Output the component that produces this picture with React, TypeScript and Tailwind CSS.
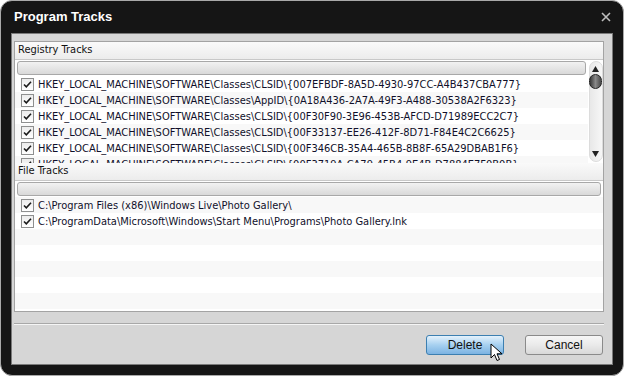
import React from 'react';

const registryRows = [
  'HKEY_LOCAL_MACHINE\\SOFTWARE\\Classes\\CLSID\\{007EFBDF-8A5D-4930-97CC-A4B437CBA777}',
  'HKEY_LOCAL_MACHINE\\SOFTWARE\\Classes\\AppID\\{0A18A436-2A7A-49F3-A488-30538A2F6323}',
  'HKEY_LOCAL_MACHINE\\SOFTWARE\\Classes\\CLSID\\{00F30F90-3E96-453B-AFCD-D71989ECC2C7}',
  'HKEY_LOCAL_MACHINE\\SOFTWARE\\Classes\\CLSID\\{00F33137-EE26-412F-8D71-F84E4C2C6625}',
  'HKEY_LOCAL_MACHINE\\SOFTWARE\\Classes\\CLSID\\{00F346CB-35A4-465B-8B8F-65A29DBAB1F6}',
  'HKEY_LOCAL_MACHINE\\SOFTWARE\\Classes\\CLSID\\{00F3719A-CA79-45B4-9E4B-D7884E7F0B0B}',
];

const fileRows = [
  'C:\\Program Files (x86)\\Windows Live\\Photo Gallery\\',
  'C:\\ProgramData\\Microsoft\\Windows\\Start Menu\\Programs\\Photo Gallery.lnk',
];

const Check: React.FC = () => (
  <span className="w-[13px] h-[13px] shrink-0 border border-[#8e8f8f] bg-gradient-to-b from-[#ececec] to-white flex items-center justify-center">
    <svg width="9" height="9" viewBox="0 0 9 9">
      <path d="M1 4.5 L3.3 6.8 L8 1.8" stroke="#1a1a1a" strokeWidth="1.6" fill="none" />
    </svg>
  </span>
);

const Row: React.FC<{ text: string; odd: boolean }> = ({ text, odd }) => (
  <div className={`h-4 shrink-0 flex items-center gap-[4px] pl-[6px] whitespace-nowrap overflow-hidden ${odd ? 'bg-[#f8f8f8]' : 'bg-white'}`}>
    <Check />
    <span className="text-[11px] text-[#10102a] leading-none">{text}</span>
  </div>
);

const SectionHeader: React.FC<{ title: string }> = ({ title }) => (
  <div className="h-[18px] shrink-0 flex items-center pl-[3px] bg-gradient-to-b from-[#fafafa] to-[#ececec] border-b border-[#c8c8c8] text-[11px] text-[#111]">
    {title}
  </div>
);

const FilterBar: React.FC = () => (
  <div className="h-[14px] shrink-0 mx-[2px] my-[1px] rounded-[3px] border border-[#a8a8a8] bg-gradient-to-b from-[#f2f2f2] to-[#d9d9d9]" />
);

const ScrollBar: React.FC = () => (
  <div className="w-[15px] shrink-0 flex flex-col items-center bg-white pt-[1px]">
    <div className="w-[14px] h-[101px] rounded-full bg-gradient-to-r from-[#e8e8e8] to-[#f7f7f7] border border-[#dcdcdc] flex flex-col items-center pt-[4px]">
      <svg width="7" height="6" viewBox="0 0 7 6"><path d="M3.5 0 L7 6 L0 6 Z" fill="#222" /></svg>
      <div className="mt-[2px] w-[13px] h-[15px] rounded-full bg-gradient-to-r from-[#3a3a3a] via-[#8a8a8a] to-[#4a4a4a] border border-[#222]" />
      <div className="flex-1" />
      <svg width="7" height="6" viewBox="0 0 7 6" className="mb-[4px]"><path d="M0 0 L7 0 L3.5 6 Z" fill="#222" /></svg>
    </div>
  </div>
);

export default function App() {
  return (
    <div className="w-[624px] h-[376px] bg-white" style={{ fontFamily: '"DejaVu Sans Condensed", "Liberation Sans", sans-serif' }}>
      <div className="w-full h-full rounded-[12px] border border-[#a9a9a9] bg-[#151515] flex flex-col px-[10px] pb-[10px]">
        <div className="h-[32px] flex items-center justify-between pl-[3px] pr-[2px]">
          <span className="text-white font-bold text-[13px]" style={{ fontFamily: '"Liberation Sans", sans-serif' }}>Program Tracks</span>
          <svg width="10" height="10" viewBox="0 0 10 10">
            <path d="M1 1 L9 9 M9 1 L1 9" stroke="#bdbdbd" strokeWidth="1.6" />
          </svg>
        </div>
        <div className="flex-1 bg-[#d6d6d6] border border-[#7a7a7a] flex flex-col px-[2px] pt-[7px]">
          <div className="h-[271px] bg-white border border-[#a3a3a3] mr-[6px] flex flex-col">
            <SectionHeader title="Registry Tracks" />
            <div className="flex h-[103px] shrink-0 overflow-hidden">
              <div className="flex-1 flex flex-col overflow-hidden">
                <FilterBar />
                <div className="flex flex-col">
                  {registryRows.map((r, i) => (
                    <Row key={r} text={r} odd={i % 2 === 1} />
                  ))}
                </div>
              </div>
              <ScrollBar />
            </div>
            <SectionHeader title="File Tracks" />
            <FilterBar />
            <div className="flex-1 flex flex-col overflow-hidden">
              {fileRows.map((r, i) => (
                <Row key={r} text={r} odd={i % 2 === 0} />
              ))}
              {[0, 1, 2, 3, 4, 5].map((i) => (
                <div key={i} className={`h-4 shrink-0 ${i % 2 === 0 ? 'bg-[#f8f8f8]' : 'bg-white'}`} />
              ))}
            </div>
          </div>
          <div className="mt-[11px] h-[2px] border-t border-[#a8a8a8] border-b border-b-[#f5f5f5] mr-[6px]" />
          <div className="flex justify-end gap-[21px] pr-[7px] mt-[10px]">
            <button className="relative w-[78px] h-[20px] rounded-[3px] border border-[#3c7fb1] bg-gradient-to-b from-[#e4f2fc] via-[#a6d0f0] to-[#7cb3e2] text-[12px] text-[#111]" style={{ fontFamily: '"Liberation Sans", sans-serif' }}>
              Delete
              <svg className="absolute left-[63px] top-[7px]" width="13" height="20" viewBox="0 0 13 20">
                <path d="M1 1 L1 15 L4.5 11.5 L7 17.5 L9.5 16.5 L7 10.8 L12 10.8 Z" fill="white" stroke="black" strokeWidth="1" />
              </svg>
            </button>
            <button className="w-[78px] h-[20px] rounded-[3px] border border-[#8a8a8a] bg-gradient-to-b from-[#f6f6f6] via-[#eaeaea] to-[#d8d8d8] text-[12px] text-[#111]" style={{ fontFamily: '"Liberation Sans", sans-serif' }}>
              Cancel
            </button>
          </div>
        </div>
      </div>
    </div>
  );
}
